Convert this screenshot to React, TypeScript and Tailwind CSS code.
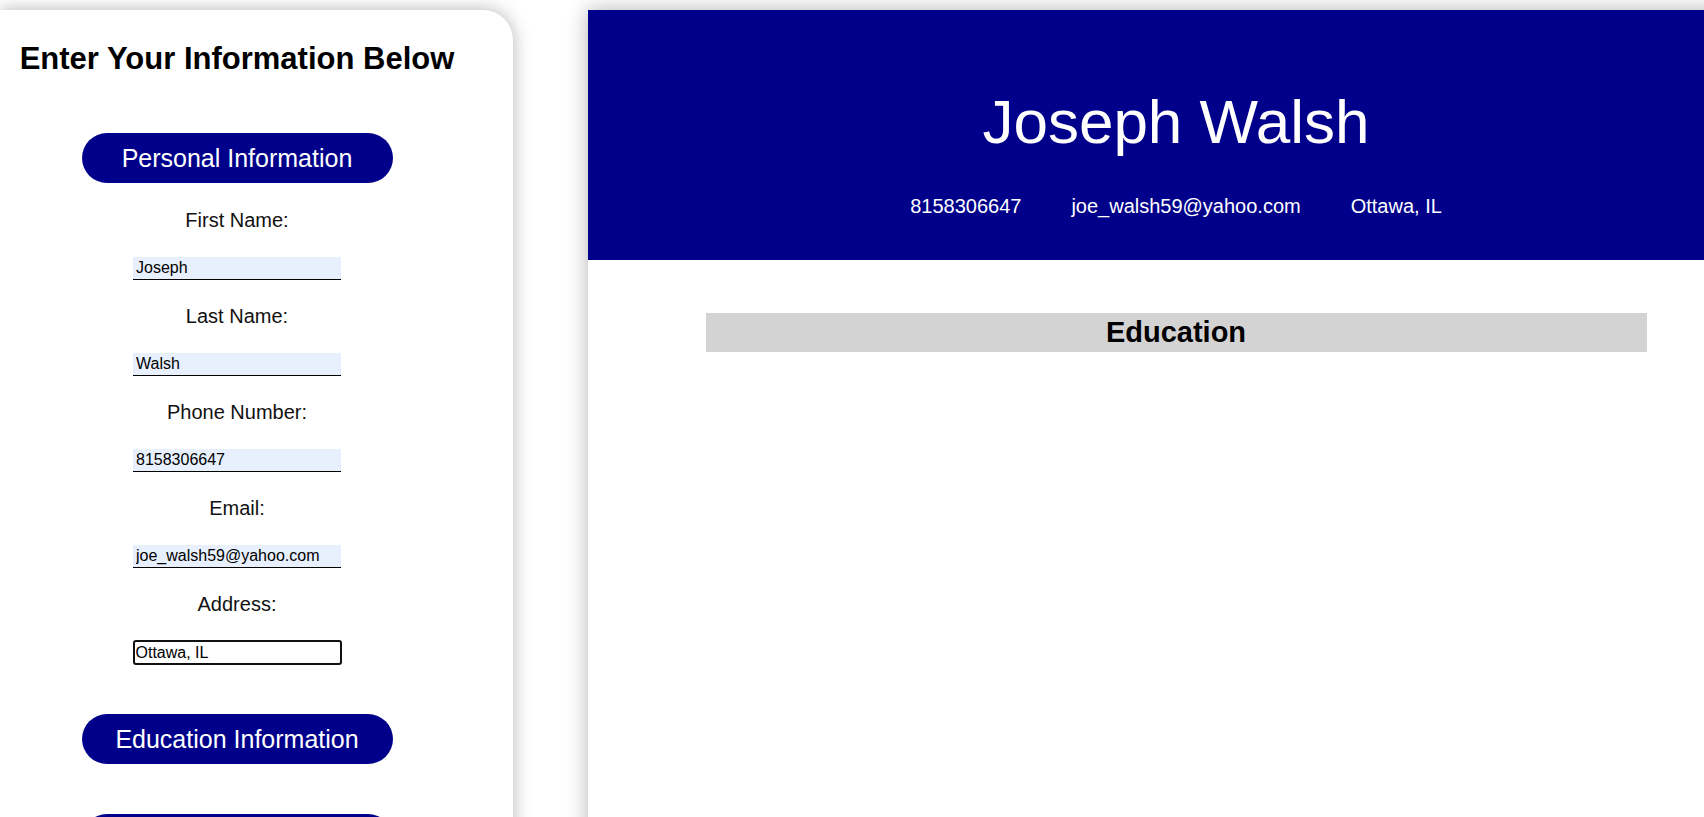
import React, { useState } from "react";

type Info = {
  firstName: string;
  lastName: string;
  phone: string;
  email: string;
  address: string;
};

const fields: { key: keyof Info; label: string }[] = [
  { key: "firstName", label: "First Name:" },
  { key: "lastName", label: "Last Name:" },
  { key: "phone", label: "Phone Number:" },
  { key: "email", label: "Email:" },
  { key: "address", label: "Address:" },
];

const SectionButton = ({ title }: { title?: string }) => (
  <button className="h-[50px] w-[311px] shrink-0 rounded-full bg-[#00008b] text-[25px] leading-none text-white">
    {title}
  </button>
);

export default function App() {
  const [info, setInfo] = useState<Info>({
    firstName: "Joseph",
    lastName: "Walsh",
    phone: "8158306647",
    email: "joe_walsh59@yahoo.com",
    address: "Ottawa, IL",
  });

  return (
    <div
      className="flex h-[817px] w-full gap-[75px] overflow-hidden bg-white pt-[10px] text-black"
      style={{ fontFamily: '"Liberation Sans", Arial, sans-serif' }}
    >
      {/* form side */}
      <div className="flex h-[900px] w-[513px] shrink-0 flex-col rounded-tr-[30px] bg-white pr-[39px] shadow-[0_0_18px_rgba(0,0,0,0.3)]">
        <div className="flex flex-col items-center">
          <h1 className="mt-[31px] text-[31px] font-bold leading-[36px]">Enter Your Information Below</h1>
          <div className="mt-[56px]">
            <SectionButton title="Personal Information" />
          </div>
          <div className="mt-[26px] flex flex-col items-center">
            {fields.map((f, i) => {
              const isLast = f.key === "address";
              return (
                <div key={f.key} className={`flex flex-col items-center ${i > 0 ? "mt-[25px]" : ""}`}>
                  <label className="h-[23px] text-[20px] leading-[23px] text-[#111]">{f.label}</label>
                  <input
                    value={info[f.key]}
                    onChange={(e) => setInfo({ ...info, [f.key]: e.target.value })}
                    className={
                      isLast
                        ? "mt-[24px] h-[25px] w-[209px] rounded-[3px] border-2 border-[#111] bg-white px-[1px] text-[16px] leading-[18px] text-black outline-none"
                        : "mt-[25px] h-[23px] w-[208px] border-b border-black bg-[#e8f0fe] px-[3px] text-[16px] leading-[18px] text-black outline-none"
                    }
                  />
                </div>
              );
            })}
          </div>
          <div className="mt-[49px]">
            <SectionButton title="Education Information" />
          </div>
          <div className="mt-[50px]">
            <SectionButton />
          </div>
        </div>
      </div>

      {/* resume preview */}
      <div className="h-[900px] w-[1176px] shrink-0 bg-white shadow-[0_0_20px_rgba(0,0,0,0.3)]">
        <div className="flex h-[250px] flex-col items-center bg-[#00008b] text-white">
          <div className="mt-[76px] text-[62px] leading-[71px]">
            {info.firstName} {info.lastName}
          </div>
          <div className="mt-[38px] flex gap-[50px] text-[20px] leading-[23px]">
            <span>{info.phone}</span>
            <span>{info.email}</span>
            <span>{info.address}</span>
          </div>
        </div>
        <div className="mt-[53px] flex justify-center">
          <div className="flex h-[39px] w-[941px] items-center justify-center bg-[#d3d3d3]">
            <h2 className="text-[29px] font-bold leading-none">Education</h2>
          </div>
        </div>
      </div>
    </div>
  );
}
